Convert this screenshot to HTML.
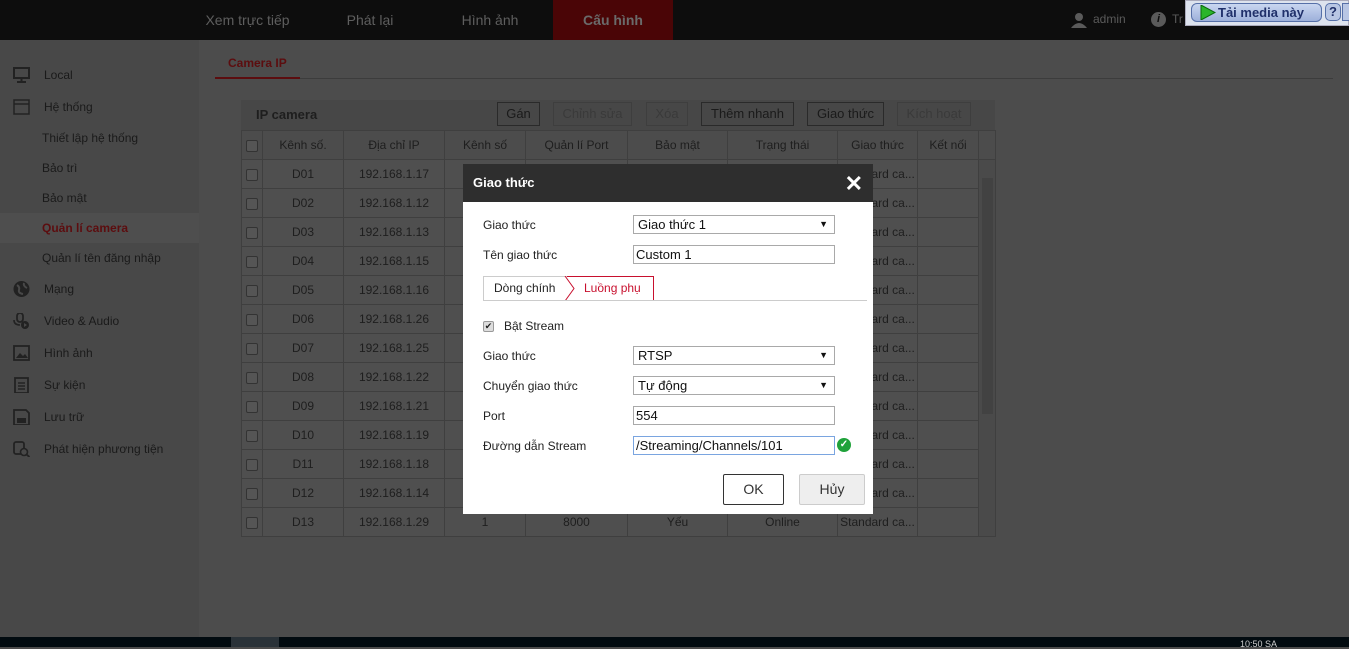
<!DOCTYPE html><html><head><meta charset="utf-8"><style>
*{box-sizing:border-box;margin:0;padding:0}
body{width:1349px;height:647px;overflow:hidden;background:#4c4c4c;font-family:"Liberation Sans",Arial,sans-serif;font-size:12px;color:#1e1e1e;position:relative}
.abs{position:absolute}
#top{left:0;top:0;width:1349px;height:40px;background:#0d0d0d}
.nav{top:0;height:40px;line-height:40px;font-size:14px;color:#5e5e5e;text-align:center}
#side{left:0;top:40px;width:199px;height:597px;background:#484848}
.si{left:0;width:199px;height:30px;line-height:30px;font-size:12px;color:#1a1a1a}
.ico{position:absolute;left:13px;top:7px;width:17px;height:16px}
table{border-collapse:collapse;position:absolute;left:241px;top:130px}
td{border:1px solid #3f3f3f;height:29px;text-align:center;color:#1e1e1e;font-size:12px;white-space:nowrap;overflow:hidden}
.cb{display:inline-block;width:12px;height:12px;border:1px solid #333;border-radius:2px;background:#555;vertical-align:middle}
.btn{top:102px;height:24px;line-height:22px;border:1px solid #2a2a2a;font-size:13px;text-align:center;color:#1a1a1a}
.dis{border-color:#3e3e3e;color:#3a3a3a}
#dlg{left:463px;top:164px;width:410px;height:350px;background:#fff}
#dh{left:0;top:0;width:410px;height:38px;background:#2e2e2e;color:#fff;font-weight:bold;font-size:13px;line-height:38px;padding-left:10px}
.lb{left:20px;font-size:12px;color:#222}
.in{left:170px;width:202px;height:19px;border:1px solid #a9a9a9;font-size:13px;line-height:17px;padding-left:4px;color:#111}
.ar{position:absolute;right:6px;top:0;font-size:9px}
</style></head><body>
<div class="abs" id="top"></div>
<div class="abs nav" style="left:190px;width:115px">Xem trực tiếp</div>
<div class="abs nav" style="left:320px;width:100px">Phát lại</div>
<div class="abs nav" style="left:440px;width:100px">Hình ảnh</div>
<div class="abs nav" style="left:553px;width:120px;background:#4a0506;font-weight:bold;color:#6a6a6a">Cấu hình</div>
<svg class="abs" style="left:1071px;top:12px" width="16" height="16"><circle cx="8" cy="5" r="4" fill="#5a5a5a"/><path d="M0 16 Q8 6 16 16Z" fill="#5a5a5a"/></svg>
<div class="abs" style="left:1093px;top:12px;color:#5a5a5a;font-size:12px">admin</div>
<div class="abs" style="left:1151px;top:12px;width:15px;height:15px;border-radius:50%;background:#5a5a5a;color:#0d0d0d;font-size:11px;font-weight:bold;text-align:center;line-height:15px;font-style:italic">i</div>
<div class="abs" style="left:1172px;top:12px;color:#5a5a5a;font-size:12px">Tr</div>
<div class="abs" style="left:1185px;top:0;width:164px;height:26px;background:#dde3ee;border:1px solid #aab"></div>
<div class="abs" style="left:1191px;top:3px;width:131px;height:19px;border:1px solid #5670a8;border-radius:6px;background:linear-gradient(#c9d6f0,#9db0da);font-weight:bold;font-size:13px;color:#20306a;line-height:17px;padding-left:26px">Tải media này</div>
<svg class="abs" style="left:1200px;top:5px" width="16" height="15"><path d="M1 0L15 7.5L1 15Z" fill="#2bb52b" stroke="#0a6a0a"/></svg>
<div class="abs" style="left:1325px;top:3px;width:16px;height:18px;border:1px solid #5670a8;border-radius:5px;background:#b8c6e4;font-weight:bold;font-size:13px;text-align:center;color:#20306a">?</div>
<div class="abs" style="left:1342px;top:3px;width:8px;height:18px;border:1px solid #5670a8;background:#b8c6e4"></div>

<div class="abs" id="side"></div>
<div class="abs si" style="top:60px;padding-left:44px"><svg class="ico" viewBox="0 0 17 16"><rect x="1" y="1" width="15" height="10" fill="none" stroke="#222" stroke-width="2"/><path d="M8.5 11v3M4 15h9" stroke="#222" stroke-width="2"/></svg>Local</div>
<div class="abs si" style="top:92px;padding-left:44px"><svg class="ico" viewBox="0 0 17 16"><rect x="1" y="1" width="15" height="14" fill="none" stroke="#222" stroke-width="1.5"/><path d="M1 5h15" stroke="#222" stroke-width="1.5"/></svg>Hệ thống</div>
<div class="abs si" style="top:123px;padding-left:42px">Thiết lập hệ thống</div>
<div class="abs si" style="top:153px;padding-left:42px">Bảo trì</div>
<div class="abs si" style="top:183px;padding-left:42px">Bảo mật</div>
<div class="abs si" style="top:213px;padding-left:42px;background:#4e4e4e;color:#5c0d0f;font-weight:bold">Quản lí camera</div>
<div class="abs si" style="top:243px;padding-left:42px">Quản lí tên đăng nhập</div>
<div class="abs si" style="top:274px;padding-left:44px"><svg class="ico" viewBox="0 0 17 16"><circle cx="8.5" cy="8" r="8" fill="#222"/><path d="M4 4q3 2 2 5t4 4M11 2q-1 3 3 5" stroke="#484848" stroke-width="2" fill="none"/></svg>Mạng</div>
<div class="abs si" style="top:306px;padding-left:44px"><svg class="ico" viewBox="0 0 17 16"><rect x="4" y="0" width="6" height="9" rx="3" fill="none" stroke="#222" stroke-width="1.8"/><path d="M1 7q0 5 6 5" stroke="#222" stroke-width="1.6" fill="none"/><circle cx="12" cy="12" r="4" fill="#222"/><path d="M11 10l3 2-3 2z" fill="#484848"/></svg>Video &amp; Audio</div>
<div class="abs si" style="top:338px;padding-left:44px"><svg class="ico" viewBox="0 0 17 16"><rect x="1" y="1" width="15" height="14" fill="none" stroke="#222" stroke-width="1.8"/><path d="M3 13l4-5 3 3 2-2 3 4z" fill="#222"/></svg>Hình ảnh</div>
<div class="abs si" style="top:370px;padding-left:44px"><svg class="ico" viewBox="0 0 17 16"><rect x="2" y="1" width="13" height="15" fill="none" stroke="#222" stroke-width="1.8"/><path d="M5 6h7M5 9h7M5 12h7" stroke="#222" stroke-width="1.4"/></svg>Sự kiện</div>
<div class="abs si" style="top:402px;padding-left:44px"><svg class="ico" viewBox="0 0 17 16"><path d="M1 1h12l3 3v12H1z" fill="none" stroke="#222" stroke-width="1.8"/><rect x="4" y="9" width="9" height="5" fill="#222"/></svg>Lưu trữ</div>
<div class="abs si" style="top:434px;padding-left:44px"><svg class="ico" viewBox="0 0 17 16"><rect x="1" y="1" width="10" height="12" rx="2" fill="none" stroke="#222" stroke-width="1.8"/><circle cx="11" cy="11" r="3.5" fill="#484848" stroke="#222" stroke-width="1.6"/><path d="M13.5 13.5l3 2.5" stroke="#222" stroke-width="1.8"/></svg>Phát hiện phương tiện</div>

<div class="abs" style="left:228px;top:56px;font-size:12px;color:#5c0d0f;font-weight:bold">Camera IP</div>
<div class="abs" style="left:215px;top:78px;width:1118px;height:1px;background:#3c3c3c"></div>
<div class="abs" style="left:215px;top:77px;width:85px;height:2px;background:#5c0d0f"></div>

<div class="abs" style="left:241px;top:100px;width:754px;height:30px;background:#474747"></div>
<div class="abs" style="left:256px;top:107px;font-size:13px;font-weight:bold;color:#1e1e1e">IP camera</div>
<div class="abs btn" style="left:497px;width:43px">Gán</div>
<div class="abs btn dis" style="left:553px;width:79px">Chỉnh sửa</div>
<div class="abs btn dis" style="left:646px;width:42px">Xóa</div>
<div class="abs btn" style="left:701px;width:93px">Thêm nhanh</div>
<div class="abs btn" style="left:807px;width:77px">Giao thức</div>
<div class="abs btn dis" style="left:897px;width:74px">Kích hoạt</div>

<table style="background:#4f4f4f">
<tr style="background:#4c4c4c"><td style="width:21px"><span class="cb"></span></td><td style="width:81px">Kênh số.</td><td style="width:101px">Địa chỉ IP</td><td style="width:81px">Kênh số</td><td style="width:102px">Quản lí Port</td><td style="width:100px">Bảo mật</td><td style="width:110px">Trạng thái</td><td style="width:80px">Giao thức</td><td style="width:61px">Kết nối</td><td style="width:17px"></td></tr>
<tr><td><span class="cb"></span></td><td>D01</td><td>192.168.1.17</td><td></td><td></td><td></td><td></td><td>Standard ca...</td><td></td><td rowspan="13" style="background:#4a4a4a;position:relative"><div style="position:absolute;left:3px;top:18px;width:11px;height:236px;background:#424242"></div></td></tr>
<tr><td><span class="cb"></span></td><td>D02</td><td>192.168.1.12</td><td></td><td></td><td></td><td></td><td>Standard ca...</td><td></td></tr>
<tr><td><span class="cb"></span></td><td>D03</td><td>192.168.1.13</td><td></td><td></td><td></td><td></td><td>Standard ca...</td><td></td></tr>
<tr><td><span class="cb"></span></td><td>D04</td><td>192.168.1.15</td><td></td><td></td><td></td><td></td><td>Standard ca...</td><td></td></tr>
<tr><td><span class="cb"></span></td><td>D05</td><td>192.168.1.16</td><td></td><td></td><td></td><td></td><td>Standard ca...</td><td></td></tr>
<tr><td><span class="cb"></span></td><td>D06</td><td>192.168.1.26</td><td></td><td></td><td></td><td></td><td>Standard ca...</td><td></td></tr>
<tr><td><span class="cb"></span></td><td>D07</td><td>192.168.1.25</td><td></td><td></td><td></td><td></td><td>Standard ca...</td><td></td></tr>
<tr><td><span class="cb"></span></td><td>D08</td><td>192.168.1.22</td><td></td><td></td><td></td><td></td><td>Standard ca...</td><td></td></tr>
<tr><td><span class="cb"></span></td><td>D09</td><td>192.168.1.21</td><td></td><td></td><td></td><td></td><td>Standard ca...</td><td></td></tr>
<tr><td><span class="cb"></span></td><td>D10</td><td>192.168.1.19</td><td></td><td></td><td></td><td></td><td>Standard ca...</td><td></td></tr>
<tr><td><span class="cb"></span></td><td>D11</td><td>192.168.1.18</td><td></td><td></td><td></td><td></td><td>Standard ca...</td><td></td></tr>
<tr><td><span class="cb"></span></td><td>D12</td><td>192.168.1.14</td><td></td><td></td><td></td><td></td><td>Standard ca...</td><td></td></tr>
<tr><td style="height:22px"><span class="cb"></span></td><td>D13</td><td>192.168.1.29</td><td>1</td><td>8000</td><td>Yếu</td><td>Online</td><td>Standard ca...</td><td></td></tr>
</table>

<div class="abs" id="dlg">
<div class="abs" id="dh">Giao thức</div>
<div class="abs" style="right:10px;top:7px;color:#fff;font-size:22px;font-weight:bold">✕</div>
<div class="abs lb" style="top:54px">Giao thức</div>
<div class="abs in" style="top:51px">Giao thức 1<span class="ar">▼</span></div>
<div class="abs lb" style="top:84px">Tên giao thức</div>
<div class="abs in" style="top:81px;padding-left:2px">Custom 1</div>
<div class="abs" style="left:20px;top:112px;width:84px;height:25px;border:1px solid #ccc;border-right:none;line-height:23px;padding-left:10px;color:#222">Dòng chính</div>
<div class="abs" style="left:104px;top:112px;width:87px;height:25px;border:1px solid #c8102e;border-left:none;line-height:23px;padding-left:17px;color:#c8102e">Luồng phụ</div>
<svg class="abs" style="left:101px;top:112px" width="12" height="25"><path d="M1 0L10 12.5L1 25" fill="#fff" stroke="#c8102e"/></svg>
<div class="abs" style="left:20px;top:136px;width:384px;height:1px;background:#ccc"></div>
<div class="abs" style="left:20px;top:157px;width:11px;height:11px;border:1px solid #999;border-radius:2px;background:#ddd;font-size:9px;line-height:9px;text-align:center">✔</div>
<div class="abs lb" style="left:41px;top:155px">Bật Stream</div>
<div class="abs lb" style="top:185px">Giao thức</div>
<div class="abs in" style="top:182px">RTSP<span class="ar">▼</span></div>
<div class="abs lb" style="top:215px">Chuyển giao thức</div>
<div class="abs in" style="top:212px">Tự động<span class="ar">▼</span></div>
<div class="abs lb" style="top:245px">Port</div>
<div class="abs in" style="top:242px;padding-left:2px">554</div>
<div class="abs lb" style="top:275px">Đường dẫn Stream</div>
<div class="abs in" style="top:272px;border-color:#7aa5e0;padding-left:2px">/Streaming/Channels/101</div>
<div class="abs" style="left:374px;top:274px;width:14px;height:14px;border-radius:50%;background:#1fa23a;color:#fff;font-size:10px;line-height:14px;text-align:center;font-weight:bold">✓</div>
<div class="abs" style="left:260px;top:310px;width:61px;height:31px;border:1px solid #333;border-radius:2px;font-size:14px;line-height:29px;text-align:center;color:#333">OK</div>
<div class="abs" style="left:336px;top:310px;width:66px;height:31px;border:1px solid #ccc;border-radius:2px;background:#eee;font-size:14px;line-height:29px;text-align:center;color:#333">Hủy</div>
</div>

<div class="abs" style="left:0;top:637px;width:1349px;height:10px;background:#020b10"></div>
<div class="abs" style="left:231px;top:637px;width:48px;height:10px;background:#2a3238"></div>
<div class="abs" style="left:1240px;top:639px;color:#ccc;font-size:9px">10:50 SA</div>
</body></html>
